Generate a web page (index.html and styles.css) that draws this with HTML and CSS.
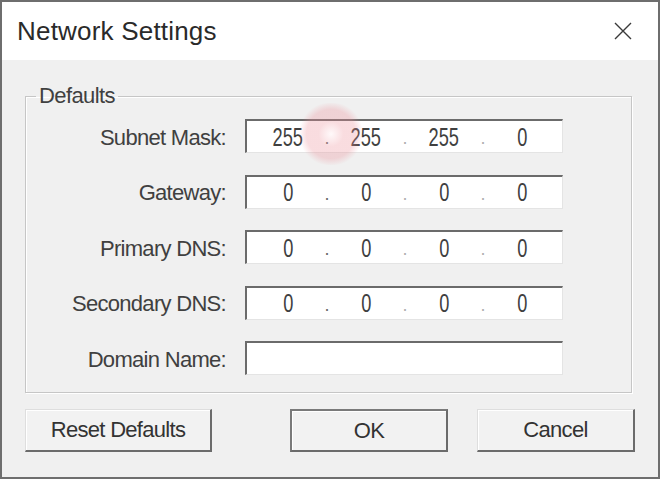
FILE: index.html
```html
<!DOCTYPE html>
<html lang="en">

<head>
    <meta charset="UTF-8">
    <meta name="viewport" content="width=device-width, initial-scale=1.0">
    <title>Network Settings</title>
    <link rel="stylesheet" href="styles.css">
</head>

<body>
    <div class="window">
        <div class="titlebar">
            <span class="title">Network Settings</span>
            <svg class="close" width="18" height="18" viewBox="0 0 18 18">
                <path d="M1 1 L17 17 M17 1 L1 17" stroke="#3a3a3a" stroke-width="1.4" fill="none" />
            </svg>
        </div>

        <div class="content">
            <fieldset class="group">
                <legend>Defaults</legend>
                <div class="form">
                    <label>Subnet Mask:</label>
                    <div class="ip">
                        <span class="oct"><span>255</span></span><span class="dot dark">.</span>
                        <span class="oct"><span>255</span></span><span class="dot">.</span>
                        <span class="oct"><span>255</span></span><span class="dot">.</span>
                        <span class="oct"><span>0</span></span>
                    </div>

                    <label>Gateway:</label>
                    <div class="ip">
                        <span class="oct"><span>0</span></span><span class="dot dark">.</span>
                        <span class="oct"><span>0</span></span><span class="dot">.</span>
                        <span class="oct"><span>0</span></span><span class="dot">.</span>
                        <span class="oct"><span>0</span></span>
                    </div>

                    <label>Primary DNS:</label>
                    <div class="ip">
                        <span class="oct"><span>0</span></span><span class="dot dark">.</span>
                        <span class="oct"><span>0</span></span><span class="dot">.</span>
                        <span class="oct"><span>0</span></span><span class="dot">.</span>
                        <span class="oct"><span>0</span></span>
                    </div>

                    <label>Secondary DNS:</label>
                    <div class="ip">
                        <span class="oct"><span>0</span></span><span class="dot dark">.</span>
                        <span class="oct"><span>0</span></span><span class="dot">.</span>
                        <span class="oct"><span>0</span></span><span class="dot">.</span>
                        <span class="oct"><span>0</span></span>
                    </div>

                    <label>Domain Name:</label>
                    <div class="ip"></div>
                </div>
            </fieldset>

            <div class="buttons">
                <button class="btn btn-reset">Reset Defaults</button>
                <button class="btn btn-ok">OK</button>
                <button class="btn btn-cancel">Cancel</button>
            </div>
        </div>

        <!-- click marker from the screen recorder -->
        <div class="click-mark"></div>
    </div>
</body>

</html>
```

FILE: styles.css
```css
body {
    margin: 0;
    font-family: "Liberation Sans", Arial, sans-serif;
    background-color: #f0f0f0;
}

.window {
    position: relative;
    width: 660px;
    height: 479px;
    box-sizing: border-box;
    border: 2px solid #6e6e6e;
    background-color: #f0f0f0;
    display: flex;
    flex-direction: column;
}

.titlebar {
    height: 58px;
    background-color: #fff;
    display: flex;
    align-items: center;
    justify-content: space-between;
    padding: 0 26px 0 15px;
}

.title {
    font-size: 26px;
    letter-spacing: 0.2px;
    color: #2a2a2a;
}

.content {
    padding: 24px 23px 0 23px;
}

.group {
    margin: 0 3px 0 0;
    padding: 11px 0 17px 0;
    min-width: 0;
    border: 1px solid #c6c6c6;
    box-shadow: inset 1px 1px 0 #fff, 1px 1px 0 #fff;
}

.group legend {
    margin-left: 10px;
    padding: 0 3px;
    font-size: 22px;
    line-height: 24px;
    letter-spacing: -0.6px;
    color: #404040;
}

.form {
    display: grid;
    grid-template-columns: 200px 318px;
    column-gap: 19px;
    row-gap: 21.5px;
    align-items: center;
}

.form label {
    text-align: right;
    font-size: 22px;
    letter-spacing: -0.7px;
    color: #404040;
    padding-top: 3px;
}

.ip {
    height: 34px;
    box-sizing: border-box;
    background-color: #fff;
    border-top: 2px solid #6b6b6b;
    border-left: 2px solid #6b6b6b;
    border-right: 1px solid #e4e4e4;
    border-bottom: 1px solid #e4e4e4;
    padding: 0 5px 0 6px;
    display: grid;
    grid-template-columns: 1fr 8px 1fr 8px 1fr 8px 1fr;
    align-items: center;
    font-size: 26px;
    line-height: 1;
}

.oct {
    text-align: center;
}

.oct span {
    display: inline-block;
    transform: scaleX(0.7);
    color: #404040;
}

.dot {
    text-align: center;
    color: #b0b0b0;
    font-size: 18px;
    align-self: end;
    padding-bottom: 5px;
}

.dot.dark {
    color: #6a6a6a;
}

.buttons {
    display: flex;
    margin-top: 16px;
}

.btn {
    height: 43px;
    box-sizing: border-box;
    font-family: inherit;
    font-size: 22px;
    letter-spacing: -0.7px;
    color: #333;
    background-color: #f2f2f2;
    border-style: solid;
    border-width: 1px 2px 2px 1px;
    border-color: #dedede #6b6b6b #6b6b6b #dedede;
    box-shadow: inset 1px 1px 0 #fff;
    padding: 0;
}

.btn-reset {
    width: 187px;
}

.btn-ok {
    width: 158px;
    margin-left: auto;
    border-width: 2px;
    border-color: #7a7a7a #6b6b6b #6b6b6b #7a7a7a;
}

.btn-cancel {
    width: 158px;
    margin-left: 29px;
}

.click-mark {
    position: absolute;
    left: 297px;
    top: 101px;
    width: 64px;
    height: 62px;
    border-radius: 45%;
    background: radial-gradient(circle, rgba(255, 240, 242, 0.4) 0, rgba(236, 140, 150, 0.3) 28%, rgba(236, 140, 150, 0.3) 55%, rgba(236, 140, 150, 0) 72%);
    pointer-events: none;
}
```
